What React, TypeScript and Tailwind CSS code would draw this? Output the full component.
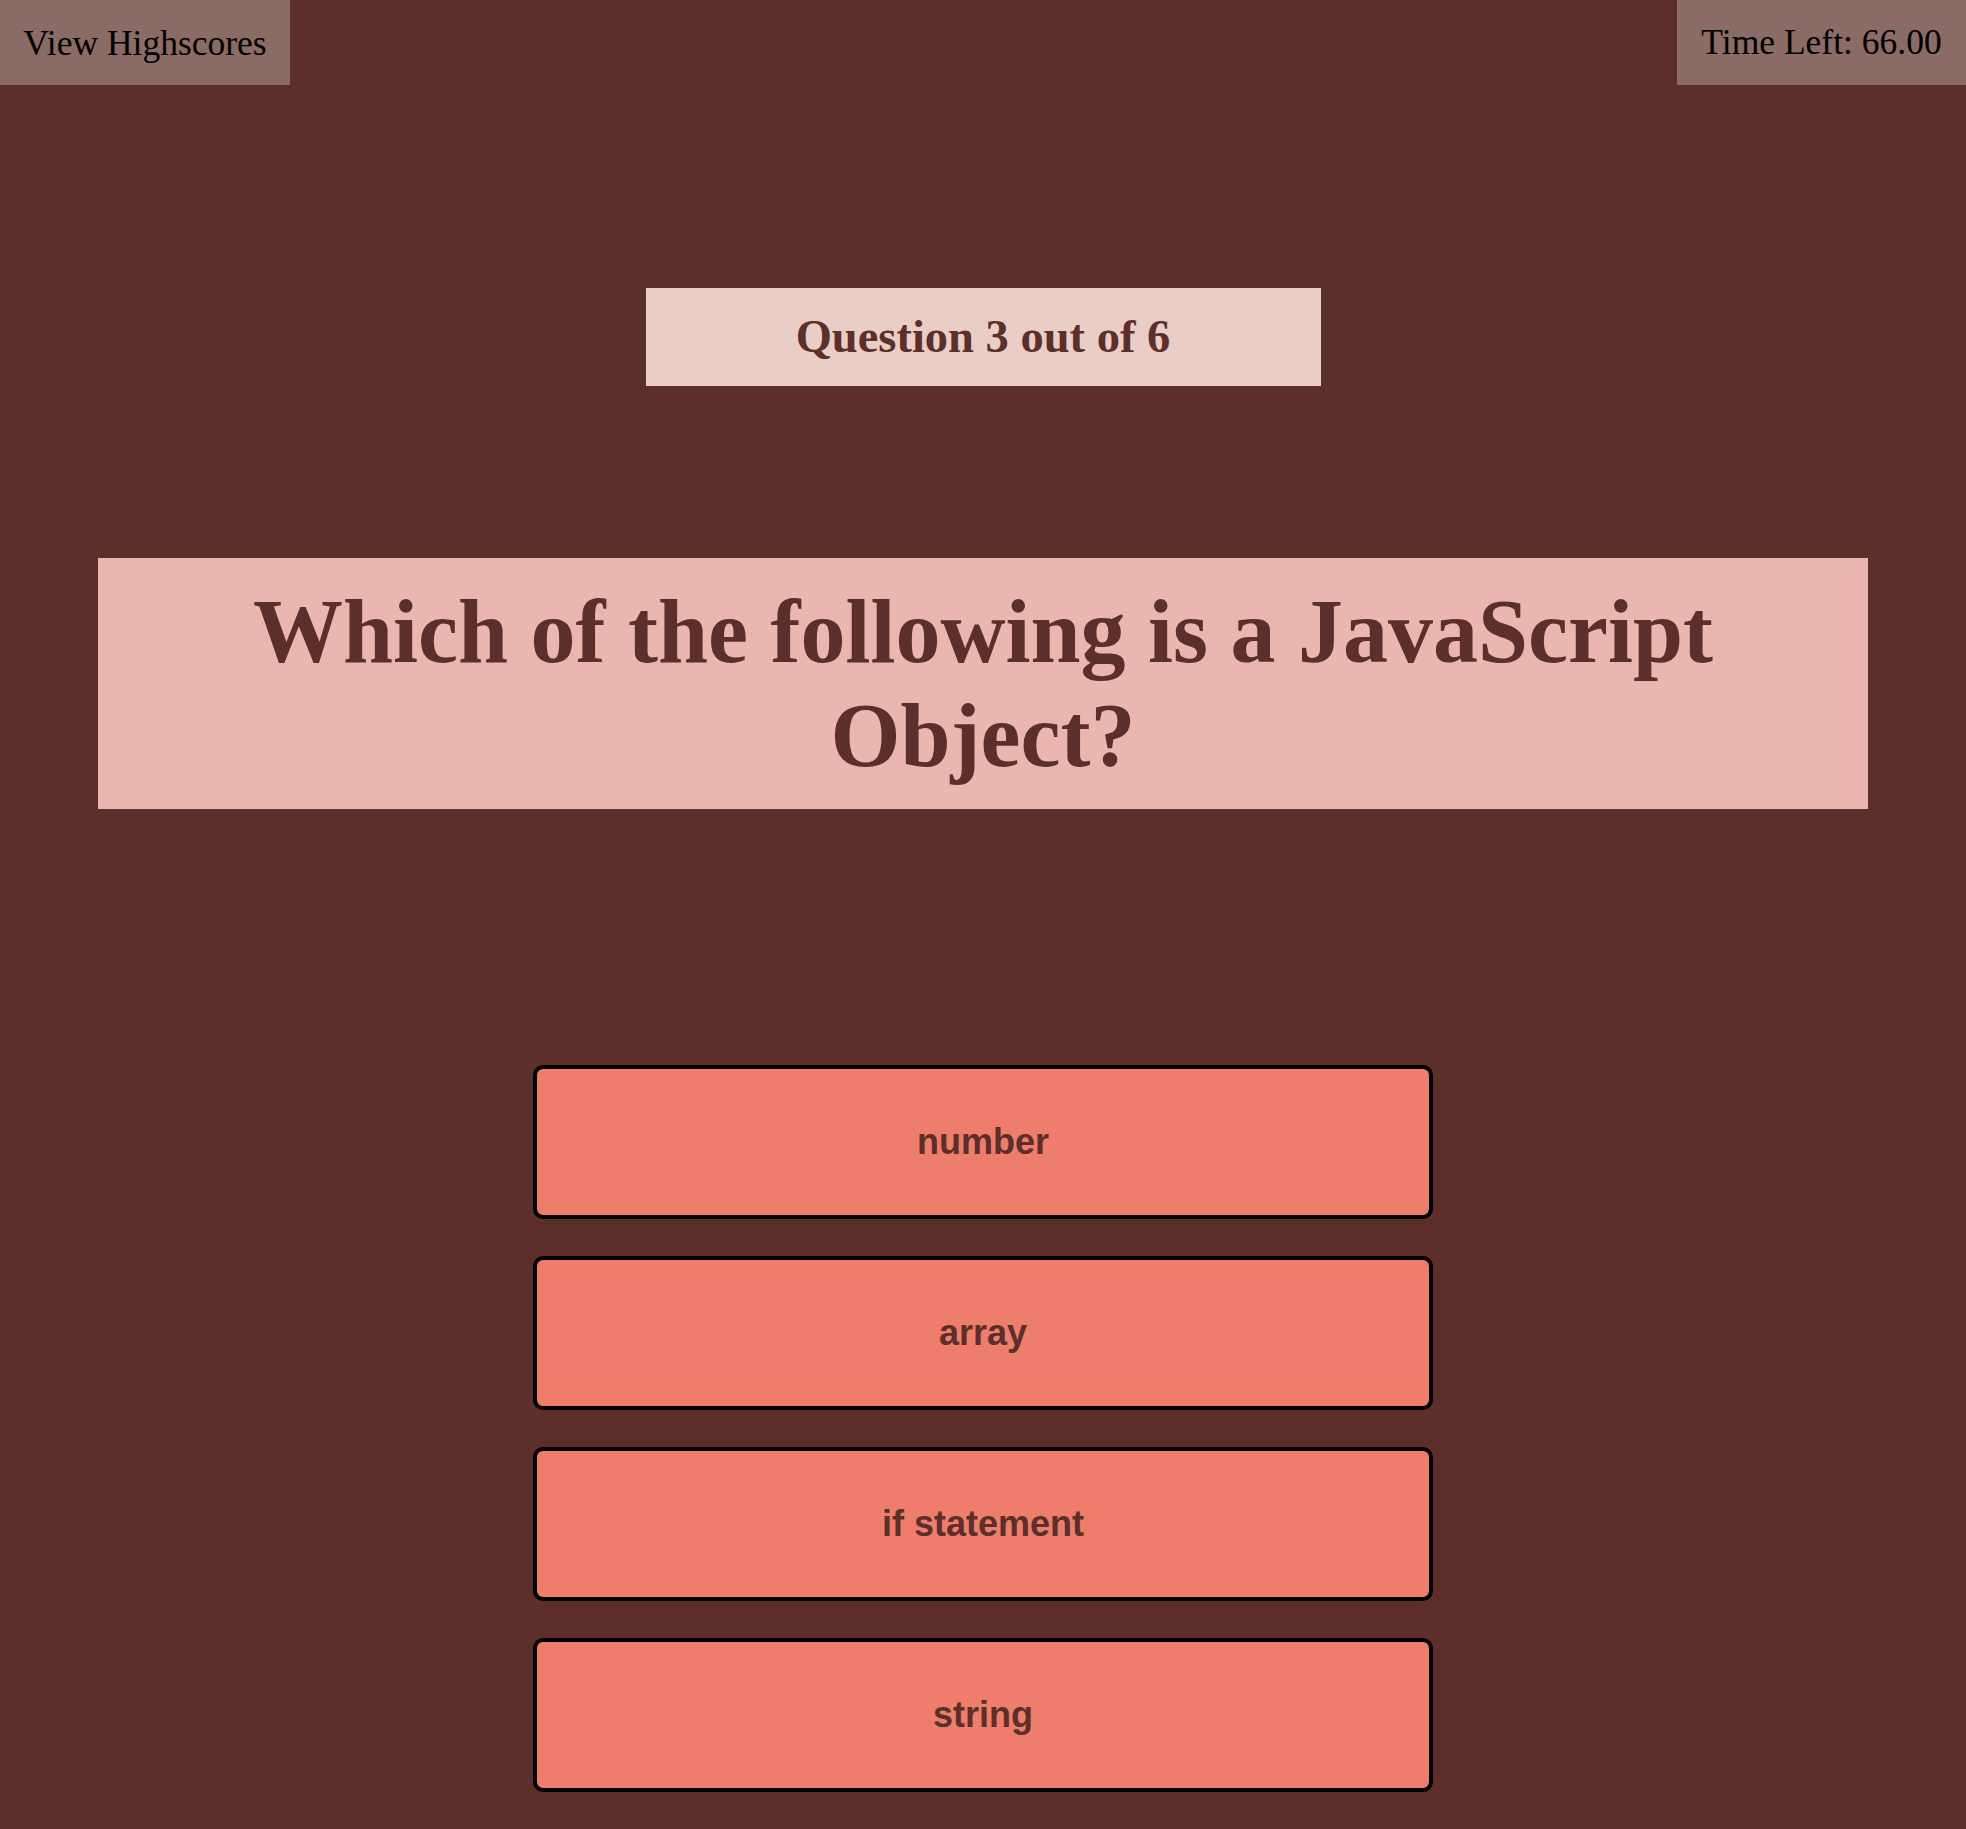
const answers = ['number', 'array', 'if statement', 'string'];

export default function App() {
  return (
    <div className="min-h-[1829px] w-full bg-[#5c2f2a] [font-family:'Liberation_Serif',serif]">
      <div className="flex items-start justify-between">
        <button className="h-[85px] w-[290px] bg-[#8a6b65] text-[35.5px] text-black text-center leading-[84px]">
          View Highscores
        </button>
        <div className="h-[85px] w-[289px] bg-[#8a6b65] text-[35.5px] text-black text-center leading-[84px]">
          Time Left: 66.00
        </div>
      </div>

      <div className="mt-[203px] mx-auto w-[675px] h-[98px] bg-[#eacdc6] flex items-center justify-center">
        <h2 className="text-[46.5px] font-bold text-[#5c2f2a] leading-[1.15]">Question 3 out of 6</h2>
      </div>

      <div className="mt-[172px] mx-auto w-[90%] h-[251px] bg-[#ebb6ae] flex items-center justify-center px-8">
        <h1 className="text-[90px] font-bold text-[#5c2f2a] text-center leading-[104px]">
          Which of the following is a JavaScript Object?
        </h1>
      </div>

      <div className="mt-[256px] flex flex-col items-center gap-[37px] pb-[38px]">
        {answers.map(a => (
          <button
            key={a}
            className="w-[900px] h-[154px] bg-[#ef7d6b] border-4 border-black rounded-[10px] text-[36px] font-bold text-[#5c2f2a] [font-family:'Liberation_Sans',Arial,sans-serif]"
          >
            {a}
          </button>
        ))}
      </div>
    </div>
  );
}
